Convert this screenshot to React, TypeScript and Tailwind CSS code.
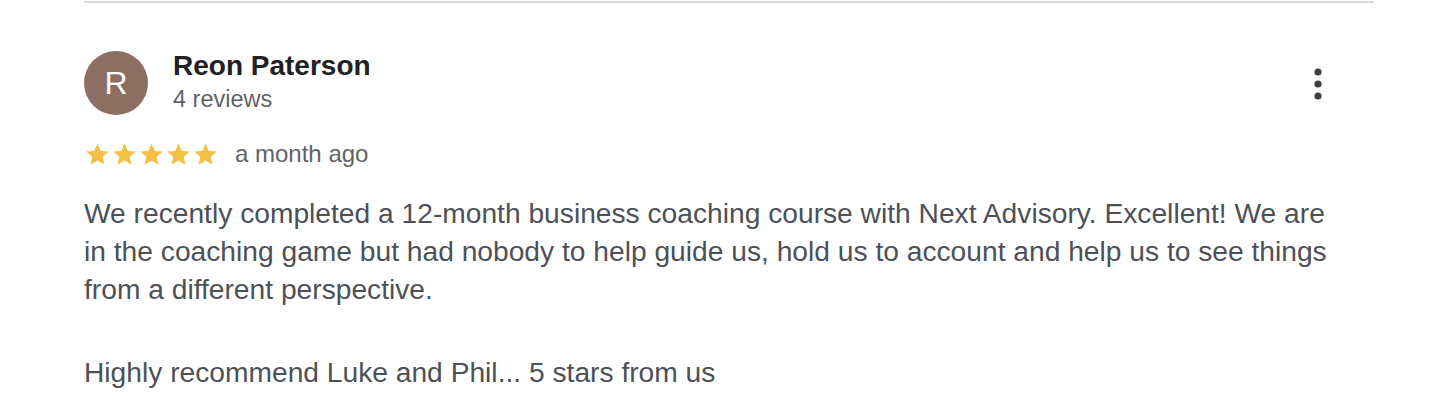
const font = { fontFamily: '"Liberation Sans", Arial, sans-serif' }

function Star() {
  return (
    <svg viewBox="0 0 24 24" className="h-[27px] w-[27px]" aria-hidden>
      <path
        fill="#f4bf42"
        d="M12 2.2l2.9 6.6 7.1.6-5.4 4.7 1.6 7-6.2-3.7-6.2 3.7 1.6-7L2 9.4l7.1-.6z"
      />
    </svg>
  )
}

function Kebab() {
  return (
    <svg viewBox="0 0 10 34" className="h-[34px] w-[10px]" aria-hidden>
      <circle cx="5" cy="5" r="3.6" fill="#3c4043" />
      <circle cx="5" cy="17" r="3.6" fill="#3c4043" />
      <circle cx="5" cy="29" r="3.6" fill="#3c4043" />
    </svg>
  )
}

export default function App() {
  return (
    <div className="min-h-[412px] bg-white" style={font}>
      <div className="ml-[84px] mr-[68px] pt-[1px]">
        <div className="h-[2px] w-full bg-[#d9d9d9]" />

        <div className="mt-[48px] flex items-start justify-between">
          <div className="flex items-center gap-[25px]">
            <div className="grid h-[64px] w-[64px] place-items-center rounded-full bg-[#8c6e63] text-[32px] text-white">
              R
            </div>
            <div className="-mt-[5px]">
              <div className="text-[28px] font-bold leading-[34px] text-[#202124]">Reon Paterson</div>
              <div className="mt-[2px] text-[23.5px] leading-[28px] text-[#5f6368]">4 reviews</div>
            </div>
          </div>
          <button className="mr-[51px] mt-[16px]">
            <Kebab />
          </button>
        </div>

        <div className="mt-[21px] flex items-center gap-[16px]">
          <div className="flex">
            <Star />
            <Star />
            <Star />
            <Star />
            <Star />
          </div>
          <span className="text-[24px] text-[#5f6368]">a month ago</span>
        </div>

        <div className="mt-[22px] max-w-[1268px] text-[28.2px] leading-[38px] text-[#4d5156]">
          <p>
            We recently completed a 12-month business coaching course with Next Advisory. Excellent! We are in the
            coaching game but had nobody to help guide us, hold us to account and help us to see things from a
            different perspective.
          </p>
          <p className="mt-[45px]">Highly recommend Luke and Phil... 5 stars from us</p>
        </div>
      </div>
    </div>
  )
}
